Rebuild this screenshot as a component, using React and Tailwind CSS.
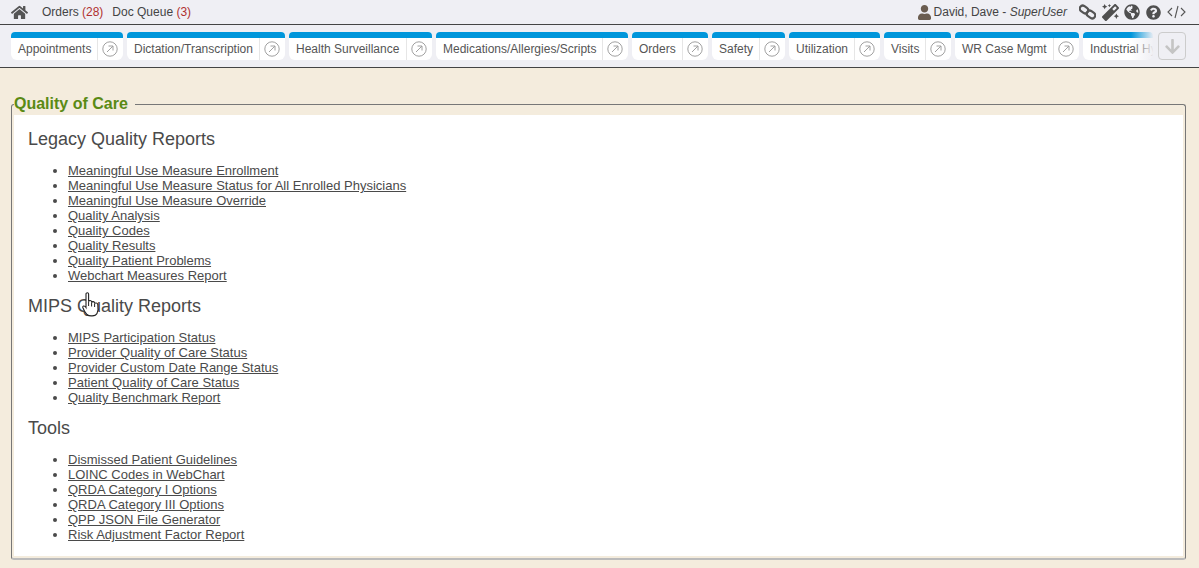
import React from 'react';
import { FaHome, FaUser, FaMagic, FaGlobeAmericas, FaQuestionCircle, FaArrowDown } from 'react-icons/fa';

const tabs = [
    { label: 'Appointments', width: 'w-[112px]' },
    { label: 'Dictation/Transcription', width: 'w-[158px]' },
    { label: 'Health Surveillance', width: 'w-[143px]' },
    { label: 'Medications/Allergies/Scripts', width: 'w-[192px]' },
    { label: 'Orders', width: 'w-[76px]' },
    { label: 'Safety', width: 'w-[73px]' },
    { label: 'Utilization', width: 'w-[91px]' },
    { label: 'Visits', width: 'w-[67px]' },
    { label: 'WR Case Mgmt', width: 'w-[124px]' },
];

const sections = [
    {
        title: 'Legacy Quality Reports',
        links: [
            'Meaningful Use Measure Enrollment',
            'Meaningful Use Measure Status for All Enrolled Physicians',
            'Meaningful Use Measure Override',
            'Quality Analysis',
            'Quality Codes',
            'Quality Results',
            'Quality Patient Problems',
            'Webchart Measures Report',
        ],
    },
    {
        title: 'MIPS Quality Reports',
        links: [
            'MIPS Participation Status',
            'Provider Quality of Care Status',
            'Provider Custom Date Range Status',
            'Patient Quality of Care Status',
            'Quality Benchmark Report',
        ],
    },
    {
        title: 'Tools',
        links: [
            'Dismissed Patient Guidelines',
            'LOINC Codes in WebChart',
            'QRDA Category I Options',
            'QRDA Category III Options',
            'QPP JSON File Generator',
            'Risk Adjustment Factor Report',
        ],
    },
];

function ArrowCircle() {
    return (
        <svg className="w-4 h-4" viewBox="0 0 16 16" fill="none" stroke="#a0a0a0" strokeWidth="1">
            <circle cx="8" cy="8" r="7.2" />
            <path d="M5 11L11 5M6.5 5H11V9.5" />
        </svg>
    );
}

function ChainIcon() {
    return (
        <svg className="ml-[12px] w-[17px] h-[16px]" viewBox="0 0 17 16" fill="none" stroke="#555" strokeWidth="2.2">
            <rect x="0.5" y="2.5" width="9" height="6" rx="3" transform="rotate(35 5 5.5)" />
            <rect x="7.5" y="7.5" width="9" height="6" rx="3" transform="rotate(35 12 10.5)" />
        </svg>
    );
}

function Tab({ label, width }) {
    return (
        <div className={`${width} shrink-0 h-7 flex flex-col rounded-t-[4px] rounded-b-[6px] overflow-hidden bg-white`}>
            <div className="h-[6px] bg-[#0096db]" />
            <div className="flex-1 flex items-center">
                <span className="flex-1 pl-[7px] text-xs text-[#555] whitespace-nowrap">{label}</span>
                <span className="w-[26px] h-full flex items-center justify-center pr-[1px] border-l border-[#e6e6e6]">
                    <ArrowCircle />
                </span>
            </div>
        </div>
    );
}

function HandCursor() {
    return (
        <svg className="absolute left-[82px] top-[292px] w-[18px] h-[25px]" viewBox="0 0 18 25">
            <path
                d="M4 2C4 .4 6.6 .4 6.6 2V9.5C7 8.2 9.4 8.2 9.6 9.8V10.5C10 9.2 12.4 9.4 12.6 11V11.6C13 10.6 15.6 10.8 15.8 12.6C16.2 15.5 16.2 19 15 21.5C13.5 24.5 7 24.5 5 22.5C3.2 20.5 1.6 18 .8 15.5C.4 14 2.4 13 4 15.5V2Z"
                fill="#fff"
                stroke="#222"
                strokeWidth="1.1"
            />
            <path d="M6.6 9.5V14M9.6 10.5V14.5M12.6 11.6V15" fill="none" stroke="#222" strokeWidth="1" />
        </svg>
    );
}

export default function App() {
    return (
        <div className="relative w-[1199px] h-[568px] overflow-hidden bg-[#f4ecdd] font-['Liberation_Sans',Arial,sans-serif]">
            {/* top bar */}
            <div className="h-[25px] bg-[#efeff4] border-b border-[#444] flex items-center text-xs text-[#444]">
                <FaHome className="ml-[11px] w-[17px] h-[17px] text-[#555]" />
                <span className="ml-[14px]">Orders <span className="text-[#b03030]">(28)</span></span>
                <span className="ml-[9px]">Doc Queue <span className="text-[#b03030]">(3)</span></span>
                <div className="ml-auto flex items-center text-[#4f4f4f]">
                    <FaUser className="w-[13px] h-[15px] text-[#6b5d50]" />
                    <span className="ml-[3px] text-[#444]">David, Dave - <em>SuperUser</em></span>
                    <ChainIcon />
                    <FaMagic className="ml-[6px] w-[17px] h-[17px]" />
                    <FaGlobeAmericas className="ml-[5px] w-[16px] h-[16px]" />
                    <FaQuestionCircle className="ml-[6px] w-[15px] h-[15px]" />
                    <svg className="ml-[6px] mr-[13px] w-[19px] h-[14px]" viewBox="0 0 19 14" fill="none" stroke="#555" strokeWidth="1.1">
                        <path d="M5 3L1 7L5 11M8 13L11 1M14 3L18 7L14 11" />
                    </svg>
                </div>
            </div>

            {/* tab strip */}
            <div className="relative h-[43px] bg-[#efeff4] border-b border-[#444] pt-[7px] pl-[11px] flex gap-1 overflow-hidden">
                {tabs.map((tab) => (
                    <Tab key={tab.label} label={tab.label} width={tab.width} />
                ))}
                <div className="w-[70px] shrink-0 h-7 flex flex-col rounded-t-[4px] rounded-b-[6px] overflow-hidden bg-white">
                    <div className="h-[6px] bg-[#0096db]" />
                    <span className="flex-1 flex items-center pl-[7px] text-xs text-[#555] whitespace-nowrap overflow-hidden">Industrial Hygiene</span>
                </div>
                <div className="absolute left-[1131px] top-0 w-[23px] h-[42px] bg-gradient-to-r from-transparent to-[#efeff4]" />
                <div className="absolute left-[1158px] top-[7px] w-[28px] h-7 bg-[#efeff4] border border-[#ccc] rounded-[4px] flex items-center justify-center">
                    <FaArrowDown className="w-[17px] h-[17px] text-[#c4c4c4]" />
                </div>
            </div>

            {/* main panel */}
            <div className="px-[11px] pt-[27px]">
                <fieldset className="w-[1175px] h-[465px] border border-[#777] rounded-[3px] border-b-[#bbb] border-b-2 px-[2px] pb-0">
                    <legend className="pr-[7px] text-base leading-[18px] font-bold text-[#5a8a14]">Quality of Care</legend>
                    <div className="bg-white mt-[2px] h-[441px] pl-[14px] pt-[14px] text-[#4a4a4a]">
                        {sections.map((section) => (
                            <div key={section.title} className="mb-[13px]">
                                <h2 className="text-lg leading-[21px] mb-[13px]">{section.title}</h2>
                                <ul className="list-disc pl-10 text-[13px] leading-[15px]">
                                    {section.links.map((link) => (
                                        <li key={link}>
                                            <a href="#" className="underline">{link}</a>
                                        </li>
                                    ))}
                                </ul>
                            </div>
                        ))}
                    </div>
                </fieldset>
            </div>

            <HandCursor />
        </div>
    );
}
